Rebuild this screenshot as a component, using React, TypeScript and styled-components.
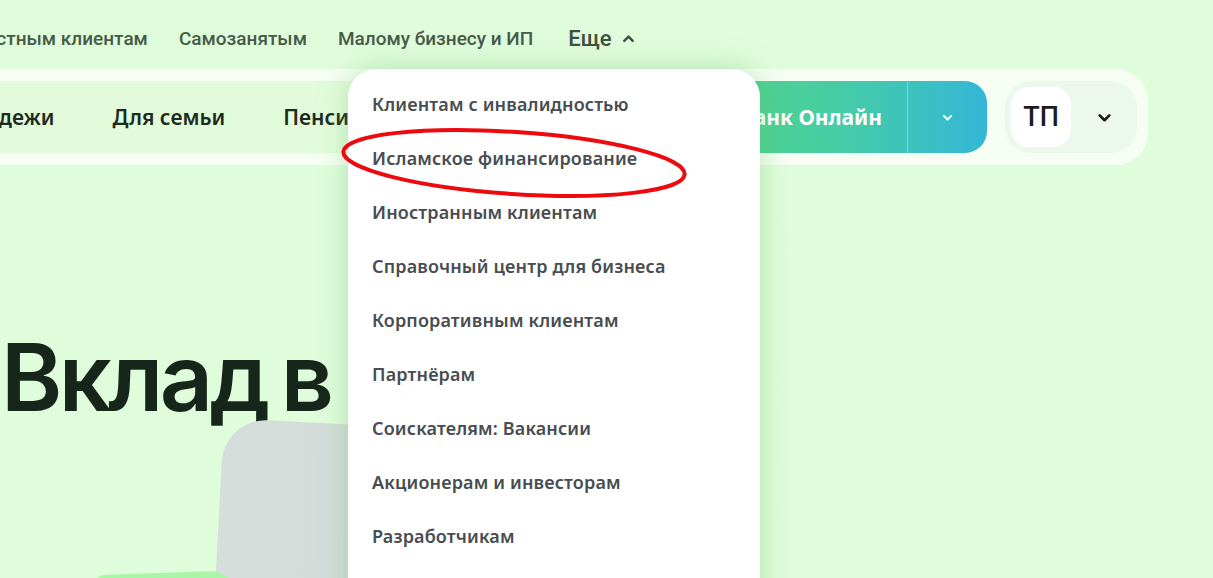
import React from 'react';
import styled, { createGlobalStyle } from 'styled-components';

const GlobalStyle = createGlobalStyle`
  html, body {
    margin: 0;
    padding: 0;
    background: #dffcdb;
  }
  * {
    box-sizing: border-box;
  }
`;

const topLinks = ['Частным клиентам', 'Самозанятым', 'Малому бизнесу и ИП'];
const mainLinks = ['Молодежи', 'Для семьи', 'Пенсионерам'];
const moreLinks = [
  'Клиентам с инвалидностью',
  'Исламское финансирование',
  'Иностранным клиентам',
  'Справочный центр для бизнеса',
  'Корпоративным клиентам',
  'Партнёрам',
  'Соискателям: Вакансии',
  'Акционерам и инвесторам',
  'Разработчикам',
  'Пресс-центр',
];

const Page = styled.div`
  position: relative;
  width: 1213px;
  height: 578px;
  overflow: hidden;
  background: linear-gradient(180deg, #e0fddb 0%, #dffcdb 100%);
  font-family: 'Noto Sans', 'Open Sans', sans-serif;
`;

const TopNav = styled.nav`
  display: flex;
  align-items: center;
  gap: 31px;
  height: 69px;
  margin-left: -27px;
  padding-top: 7px;
`;

const TopLink = styled.a`
  font-family: Roboto, 'Noto Sans', sans-serif;
  font-size: 19px;
  font-weight: 500;
  color: #475a49;
  white-space: nowrap;
`;

const MoreLink = styled.a`
  display: flex;
  align-items: center;
  gap: 9px;
  margin-left: 4px;
  font-family: Roboto, 'Noto Sans', sans-serif;
  font-size: 22px;
  font-weight: 500;
  color: #3f5042;
`;

const Header = styled.header`
  display: flex;
  align-items: stretch;
  gap: 12px;
  width: 1388px;
  height: 96px;
  margin-left: -240px;
  padding: 12px 11px 12px 12px;
  background: #f6fef4;
  border-radius: 32px;
`;

const MainNav = styled.div`
  flex: 1;
  display: flex;
  align-items: center;
  gap: 58px;
  padding-left: 169px;
  background: #e2fcdb;
  border-radius: 22px;
`;

const MainLink = styled.a`
  font-size: 21px;
  font-weight: 600;
  color: #1f2a20;
  white-space: nowrap;
`;

const BankButton = styled.div`
  display: flex;
  align-items: stretch;
  border-radius: 22px;
  overflow: hidden;
  background: linear-gradient(90deg, #57d97d 0%, #46cca6 55%, #34b7d6 100%);
  margin-right: 6px;
`;

const BankLabel = styled.span`
  display: flex;
  align-items: center;
  padding: 0 25px 0 28px;
  font-size: 21px;
  font-weight: 700;
  color: #ffffff;
  white-space: nowrap;
`;

const BankArrow = styled.span`
  flex: 0 0 80px;
  display: flex;
  align-items: center;
  justify-content: center;
  border-left: 1px solid rgba(255, 255, 255, 0.35);
`;

const Profile = styled.div`
  display: flex;
  align-items: center;
  flex: 0 0 132px;
  padding: 6px;
  background: #edf8ec;
  border-radius: 26px;
`;

const Avatar = styled.span`
  width: 60px;
  height: 60px;
  display: flex;
  align-items: center;
  justify-content: center;
  background: #ffffff;
  border-radius: 18px;
  font-family: Roboto, sans-serif;
  font-size: 27px;
  font-weight: 500;
  color: #1c1c1c;
`;

const ProfileArrow = styled.span`
  flex: 1;
  display: flex;
  justify-content: center;
  padding-left: 6px;
`;

const Hero = styled.section`
  position: relative;
  height: 413px;
`;

const Title = styled.h1`
  margin: 0;
  padding: 166px 0 0 1px;
  font-family: Inter, Roboto, sans-serif;
  font-size: 93px;
  font-weight: 600;
  line-height: 1;
  letter-spacing: -3.6px;
  word-spacing: -6px;
  color: #17261a;
  white-space: nowrap;
`;

const PhotoCard = styled.div`
  position: absolute;
  left: 224px;
  top: 253px;
  width: 320px;
  height: 300px;
  border-radius: 44px;
  background: linear-gradient(90deg, #d5dedb 0%, #d3dbd8 60%, #cfd8d5 100%);
  transform: rotate(3deg);
  transform-origin: top left;
`;

const GreenCard = styled.div`
  position: absolute;
  left: 88px;
  top: 408px;
  width: 145px;
  height: 60px;
  border-radius: 20px;
  background: #a9f7a6;
  transform: rotate(-2deg);
`;

const Dropdown = styled.ul`
  position: absolute;
  left: 348px;
  top: 69px;
  width: 412px;
  height: 560px;
  margin: 0;
  padding: 8px 0 0;
  list-style: none;
  background: #ffffff;
  border-radius: 28px;
  box-shadow: 0 0 30px rgba(90, 180, 90, 0.35);
`;

const DropItem = styled.li`
  height: 54px;
  display: flex;
  align-items: center;
  padding-left: 24px;
  font-size: 18px;
  font-weight: 600;
  letter-spacing: 0.15px;
  color: #484d51;
  white-space: nowrap;
`;

const Mark = styled.svg`
  position: absolute;
  left: 336px;
  top: 124px;
  pointer-events: none;
`;

const Chevron = ({ up, color, size }: { up?: boolean; color: string; size: number }) => (
  <svg width={size} height={size} viewBox="0 0 16 16" fill="none">
    <path
      d={up ? 'M3.5 10.5 L8 6 L12.5 10.5' : 'M3.5 6 L8 10.5 L12.5 6'}
      stroke={color}
      strokeWidth="2.6"
      strokeLinecap="round"
      strokeLinejoin="round"
    />
  </svg>
);

export default function App() {
  return (
    <Page>
      <GlobalStyle />
      <TopNav>
        {topLinks.map((l) => (
          <TopLink key={l}>{l}</TopLink>
        ))}
        <MoreLink>
          Еще
          <Chevron up color="#3f5042" size={15} />
        </MoreLink>
      </TopNav>
      <Header>
        <MainNav>
          {mainLinks.map((l) => (
            <MainLink key={l}>{l}</MainLink>
          ))}
        </MainNav>
        <BankButton>
          <BankLabel>СберБанк Онлайн</BankLabel>
          <BankArrow>
            <Chevron color="#ffffff" size={13} />
          </BankArrow>
        </BankButton>
        <Profile>
          <Avatar>ТП</Avatar>
          <ProfileArrow>
            <Chevron color="#1c1c1c" size={17} />
          </ProfileArrow>
        </Profile>
      </Header>
      <Hero>
        <Title>Вклад в сбере</Title>
        <PhotoCard />
        <GreenCard />
      </Hero>
      <Dropdown>
        {moreLinks.map((l) => (
          <DropItem key={l}>{l}</DropItem>
        ))}
      </Dropdown>
      <Mark width="360" height="80" viewBox="0 0 360 80">
        <ellipse
          cx="178"
          cy="39"
          rx="171"
          ry="31"
          fill="none"
          stroke="#ec0a0f"
          strokeWidth="4"
          transform="rotate(3.8 178 39)"
        />
      </Mark>
    </Page>
  );
}
